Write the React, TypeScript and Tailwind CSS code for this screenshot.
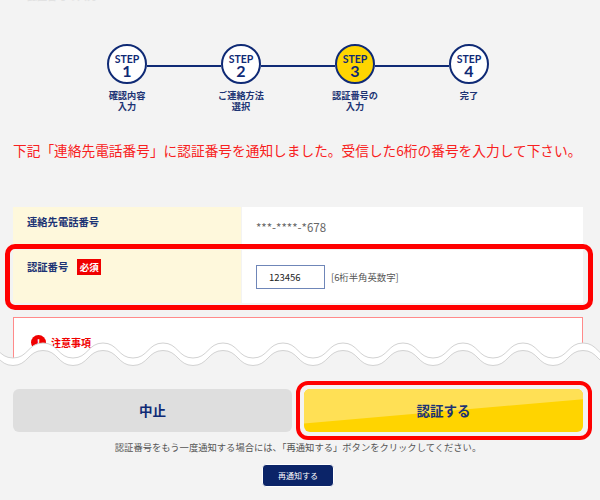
const FONT = "font-['Noto_Sans_CJK_JP','Noto_Sans',sans-serif]";

const steps = [
  { num: 1, label: ['確認内容', '入力'] },
  { num: 2, label: ['ご連絡方法', '選択'] },
  { num: 3, label: ['認証番号の', '入力'], current: true },
  { num: 4, label: ['完了'] },
];

// wave tear across the page, period 60px
const waveLine = (offset: number) => {
  let d = `M-17 ${3 + offset} C-2 ${3 + offset} -2 ${18 + offset} 13 ${18 + offset}`;
  for (let x = 13; x < 620; x += 60) {
    d += ` C${x + 15} ${18 + offset} ${x + 15} ${3 + offset} ${x + 30} ${3 + offset}`;
    d += ` C${x + 45} ${3 + offset} ${x + 45} ${18 + offset} ${x + 60} ${18 + offset}`;
  }
  return d;
};

const Wave = () => {
  const top = waveLine(0);
  const bottom = waveLine(7.5);
  return (
    <svg className="absolute left-0 top-[340px]" width="600" height="40" viewBox="0 0 600 40">
      <path d={`${top} L640 40 L-17 40 Z`} fill="#ffffff" />
      <path d={`${bottom} L640 40 L-17 40 Z`} fill="#f3f3f3" />
      <path d={top} fill="none" stroke="#d2d2d2" strokeWidth="1" />
      <path d={bottom} fill="none" stroke="#d2d2d2" strokeWidth="1" />
    </svg>
  );
};

const Stepper = () => (
  <div className="mt-[41px] pr-[4px]">
    <div className="flex items-center justify-center">
      {steps.map((s, i) => (
        <div key={s.num} className="flex items-center">
          <div
            className={`flex h-10 w-10 flex-col items-center justify-center rounded-full border-2 border-[#0f2a75] pt-[2px] text-[#0f2a75] ${
              s.current ? 'bg-[#ffd500]' : 'bg-white'
            }`}
          >
            <span className="font-['Lato',sans-serif] text-[10.5px] font-bold leading-[10px]">STEP</span>
            <span className="font-['Lato',sans-serif] text-[16px] font-bold leading-[13px]">{s.num}</span>
          </div>
          {i < steps.length - 1 && <div className="mt-[4px] h-[2px] w-[74px] bg-[#0f2a75]" />}
        </div>
      ))}
    </div>
    <div className="mt-[6px] flex justify-center">
      {steps.map((s) => (
        <div key={s.num} className="w-[114px] text-center text-[9.2px] font-bold leading-[11px] text-[#1c3374]">
          {s.label.map((l) => (
            <div key={l}>{l}</div>
          ))}
        </div>
      ))}
    </div>
  </div>
);

const FormTable = () => (
  <div className="mx-[13px] mt-[47px] flex w-[570px] flex-col gap-[2px]">
    <div className="flex h-[41px]">
      <div className="w-[228px] bg-[#fef8dc] pl-[14px] pt-[8px] text-[10.3px] font-bold leading-[14px] text-[#1c3374]">
        連絡先電話番号
      </div>
      <div className="ml-[1px] flex-1 bg-white pl-[14px] pt-[13px] text-[11.5px] leading-[14px] text-[#666666]">
        ***-****-*678
      </div>
    </div>
    <div className="relative flex h-[53px]">
      <div className="flex w-[228px] items-start gap-[9px] bg-[#fef8dc] pl-[14px] pt-[10px]">
        <span className="text-[10.3px] font-bold leading-[14px] text-[#1c3374]">認証番号</span>
        <span className="-mt-[1px] flex h-[16px] w-[24px] items-center justify-center bg-[#f00000] text-[9.5px] font-bold text-white">
          必須
        </span>
      </div>
      <div className="ml-[1px] flex flex-1 items-center gap-[6px] bg-white pl-[14px] pt-[1px]">
        <div className="flex h-[24px] w-[69px] items-center border border-[#6f86b8] pl-[12px] text-[9.5px] text-[#222222]">
          123456
        </div>
        <span className="text-[9.4px] text-[#555555]">[6桁半角英数字]</span>
      </div>
      <div className="absolute -bottom-[7px] -left-[8px] -right-[10px] -top-[6px] rounded-[10px] border-[5px] border-[#ff0000]" />
    </div>
  </div>
);

const Notice = () => (
  <div className="mx-[13px] mt-[14px] h-[60px] w-[570px] border-[1px] border-[#ff8a8a] bg-white pl-[17px] pt-[17px]">
    <div className="flex items-center gap-[5px]">
      <span className="flex h-[15px] w-[15px] items-center justify-center rounded-full bg-[#f00000] text-[10px] font-bold leading-none text-white">
        !
      </span>
      <span className="text-[10px] font-bold leading-[14px] text-[#f00000]">注意事項</span>
    </div>
  </div>
);

export default function App() {
  return (
    <div className={`relative h-[500px] w-[600px] overflow-hidden bg-[#f3f3f3] ${FONT}`}>
      <div className="flex h-[3px] items-end overflow-hidden pl-[27px] text-[10px] font-bold leading-[14px] text-[#e2e2e2]">
        認証番号の入力
      </div>
      <Stepper />
      <p className="ml-[13px] mt-[28px] whitespace-nowrap text-[13.7px] leading-[20px] text-[#f82020]">
        下記「連絡先電話番号」に認証番号を通知しました。受信した6桁の番号を入力して下さい。
      </p>
      <FormTable />
      <Notice />
      <Wave />
      <div className="absolute left-0 top-[389px] w-full">
        <div className="mx-[13px] flex w-[570px] justify-between">
          <div className="flex h-[43px] w-[279px] items-center justify-center rounded-[6px] bg-[#dedede] text-[13.5px] font-bold text-[#0f2a75]">
            中止
          </div>
          <div className="relative h-[43px] w-[279px]">
            <div className="absolute -bottom-[8px] -left-[8px] -right-[9px] -top-[8px] rounded-[12px] border-[4px] border-[#ff0000]" />
            <div className="relative flex h-full items-center justify-center overflow-hidden rounded-[6px] bg-[#ffd400]">
              <span className="absolute inset-0 bg-[#ffe055] [clip-path:polygon(0_0,100%_0,100%_24%,0_80%)]" />
              <span className="relative text-[13.5px] font-bold text-[#1c3374]">認証する</span>
            </div>
          </div>
        </div>
        <p className="mt-[7px] pr-[4px] text-center text-[9.3px] leading-[16px] text-[#555555]">
          認証番号をもう一度通知する場合には、「再通知する」ボタンをクリックしてください。
        </p>
        <div className="mt-[9px] flex justify-center pr-[4px]">
          <div className="flex h-[23px] w-[72px] items-center justify-center rounded-[4px] border border-white bg-[#0b2468] text-[8px] text-white">
            再通知する
          </div>
        </div>
      </div>
    </div>
  );
}
